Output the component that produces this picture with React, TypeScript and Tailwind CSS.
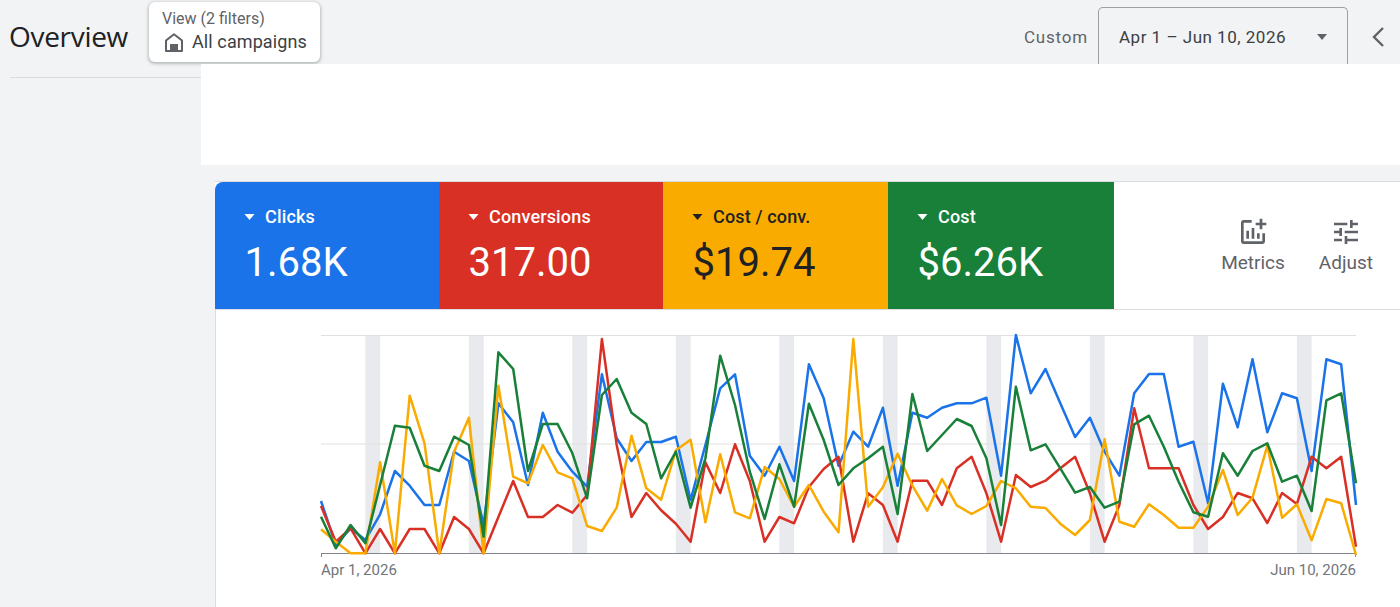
const STEP = 1035 / 70;

// y values read off the chart, in px below the top of the plot (y=335)
const toY = (z: number) => z / 3 - 10;

const BLUE = [528,660,610,645,568,438,482,540,540,380,408,600,235,292,480,263,380,440,485,148,340,408,351,351,335,525,360,190,148,392,452,365,468,118,220,422,320,365,248,482,263,278,248,235,235,218,452,30,205,132,235,336,278,380,452,205,147,147,365,350,535,176,307,103,322,205,220,438,103,118,540];
const RED = [543,650,610,685,612,685,612,612,685,576,612,685,576,468,576,576,540,563,510,42,360,576,504,556,596,650,412,504,358,468,650,576,595,486,432,395,650,505,540,650,467,467,540,430,395,505,650,450,486,467,430,395,505,650,540,250,430,430,430,540,612,576,504,520,594,504,537,395,430,395,665];
const ORANGE = [613,650,685,685,412,685,212,355,685,380,278,685,182,455,475,360,442,460,603,618,548,332,490,524,376,344,592,388,562,580,426,462,545,480,560,622,42,545,487,386,482,557,462,541,567,543,468,490,545,549,596,630,585,343,590,605,538,570,608,608,545,435,570,518,362,578,538,646,522,535,690];
const GREEN = [575,670,600,655,480,302,308,422,438,335,360,635,82,132,438,297,297,385,520,210,162,263,297,460,380,548,400,92,240,440,582,418,545,236,345,480,430,400,365,567,207,378,330,282,303,400,600,185,376,358,430,503,486,548,530,298,272,365,470,562,575,385,452,378,355,470,452,558,226,205,475];

const SERIES = [
  { color: '#1a73e8', data: BLUE },
  { color: '#d93025', data: RED },
  { color: '#f9ab00', data: ORANGE },
  { color: '#188038', data: GREEN },
];

const WEEKENDS = [0, 1, 2, 3, 4, 5, 6, 7, 8, 9].map((w) => 3 + w * 7);

const SCORECARDS = [
  { label: 'Clicks', value: '1.68K', bg: 'bg-[#1a73e8]', text: 'text-white', width: 'w-[224px]' },
  { label: 'Conversions', value: '317.00', bg: 'bg-[#d93025]', text: 'text-white', width: 'w-[224px]' },
  { label: 'Cost / conv.', value: '$19.74', bg: 'bg-[#f9ab00]', text: 'text-[#202124]', width: 'w-[225px]' },
  { label: 'Cost', value: '$6.26K', bg: 'bg-[#188038]', text: 'text-white', width: 'w-[226px]' },
];

function Chart() {
  return (
    <svg width="1040" height="226" viewBox="0 0 1040 226" className="block overflow-visible">
      {WEEKENDS.map((i) => (
        <rect key={i} x={i * STEP} y="0" width={STEP} height="218" fill="#e8eaed" />
      ))}
      <line x1="0" x2="1035" y1="0.5" y2="0.5" stroke="#e0e0e0" />
      <line x1="0" x2="1035" y1="109" y2="109" stroke="#e0e0e0" />
      <line x1="0" x2="1035" y1="218.5" y2="218.5" stroke="#80868b" strokeWidth="1.2" />
      <line x1="0.5" x2="0.5" y1="218" y2="222" stroke="#80868b" />
      <line x1="1034.5" x2="1034.5" y1="218" y2="222" stroke="#80868b" />
      {SERIES.map((s) => (
        <polyline
          key={s.color}
          fill="none"
          stroke={s.color}
          strokeWidth="2.5"
          strokeLinejoin="round"
          points={s.data.map((z, i) => `${(i * STEP).toFixed(1)},${toY(z).toFixed(1)}`).join(' ')}
        />
      ))}
    </svg>
  );
}

function Caret({ className }: { className: string }) {
  return (
    <svg width="10" height="6" viewBox="0 0 10 6" className={className}>
      <path d="M0 0h10L5 6z" fill="currentColor" />
    </svg>
  );
}

export default function App() {
  return (
    <div className="h-[607px] overflow-hidden bg-[#f1f3f4] font-['Roboto',sans-serif]">
      <header className="flex h-16 items-start">
        <h1 className="ml-[9px] mt-[18px] w-[140px] text-[28px] leading-9 text-[#202124] font-['Open_Sans',sans-serif] tracking-[-0.3px]">
          Overview
        </h1>
        <div className="mt-[2px] h-[60px] w-[171px] rounded-md bg-white pl-[13px] pt-[8px] shadow-[0_1px_3px_1px_rgba(60,64,67,0.3)]">
          <div className="text-[16px] leading-[18px] text-[#5f6368]">View (2 filters)</div>
          <div className="mt-[3px] flex items-center gap-[8px] pl-[1px]">
            <svg width="22" height="22" viewBox="0 0 22 22" className="text-[#5f6368]">
              <path d="M3 20V9.5L11 3.2l8 6.3V20z" fill="none" stroke="currentColor" strokeWidth="2" strokeLinejoin="round" />
              <rect x="7" y="13" width="8" height="7" fill="currentColor" />
            </svg>
            <span className="-ml-[1px] text-[18px] leading-[22px] tracking-[0.1px] text-[#3c4043]">All campaigns</span>
          </div>
        </div>
        <div className="flex-1" />
        <span className="mt-[26px] text-[17px] leading-[22px] tracking-[0.8px] text-[#5f6368]">Custom</span>
        <div className="ml-[10px] mt-[7px] flex h-[57px] w-[250px] items-center rounded-t-[5px] border border-b-0 border-[#9aa0a6] pl-[20px] pt-[1px]">
          <span className="text-[17px] leading-[22px] tracking-[0.5px] text-[#3c4043]">Apr 1 – Jun 10, 2026</span>
          <Caret className="ml-auto mr-[19px] h-[6px] w-[12px] text-[#5f6368]" />
        </div>
        <svg width="16" height="22" viewBox="0 0 16 22" className="ml-[23px] mt-[26px] text-[#5f6368]">
          <path d="M12 2L3 11l9 9" fill="none" stroke="currentColor" strokeWidth="2.4" />
        </svg>
        <div className="w-[13px]" />
      </header>

      <div className="flex">
        <aside className="w-[201px] shrink-0 pl-[10px] pt-[13px]">
          <div className="border-t border-[#dadce0]" />
        </aside>
        <main className="flex-1">
          <div className="h-[101px] bg-white" />
          <section className="ml-[14px] mt-[16px] h-[426px] border-t border-[#dadce0] bg-white">
            <div className="flex h-[128px] border-b border-[#dadce0]">
              {SCORECARDS.map((card, i) => (
                <div
                  key={card.label}
                  className={`${card.bg} ${card.text} ${card.width} ${i === 0 ? 'rounded-tl-lg' : ''} pl-[29px] pt-[25px]`}
                >
                  <div className="flex items-center gap-[10px] text-[18px] font-medium leading-5 tracking-[0.15px]">
                    <Caret className="h-[6px] w-[11px]" />
                    <span>{card.label}</span>
                  </div>
                  <div className="ml-[0.5px] mt-[12px] text-[40px] leading-[48px]">{card.value}</div>
                </div>
              ))}
              <div className="ml-auto flex gap-[34px] pr-[27px] pt-[34px] text-[#5f6368]">
                <div className="flex flex-col items-center">
                  <svg width="32" height="32" viewBox="0 0 24 24" fill="currentColor">
                    <path d="M22 5v2h-3v3h-2V7h-3V5h3V2h2v3h3zm-3 14H5V5h6V3H5c-1.1 0-2 .9-2 2v14c0 1.1.9 2 2 2h14c1.1 0 2-.9 2-2v-6h-2v6zm-4-6v4h2v-4h-2zm-4 4h2V9h-2v8zm-2 0v-6H7v6h2z" />
                  </svg>
                  <span className="mt-[4px] text-[19px] leading-[22px]">Metrics</span>
                </div>
                <div className="flex flex-col items-center">
                  <svg width="32" height="32" viewBox="0 0 24 24" fill="currentColor">
                    <path d="M3 17v2h6v-2H3zM3 5v2h10V5H3zm10 16v-2h8v-2h-8v-2h-2v6h2zM7 9v2H3v2h4v2h2V9H7zm14 4v-2H11v2h10zm-6-4h2V7h4V5h-4V3h-2v6z" />
                  </svg>
                  <span className="mt-[4px] text-[19px] leading-[22px]">Adjust</span>
                </div>
              </div>
            </div>
            <div className="h-full border-l border-[#dadce0] pl-[105px] pt-[25px]">
              <Chart />
              <div className="-mt-[1px] flex w-[1035px] justify-between text-[15px] leading-5 text-[#70757a]">
                <span>Apr 1, 2026</span>
                <span>Jun 10, 2026</span>
              </div>
            </div>
          </section>
        </main>
      </div>
    </div>
  );
}
